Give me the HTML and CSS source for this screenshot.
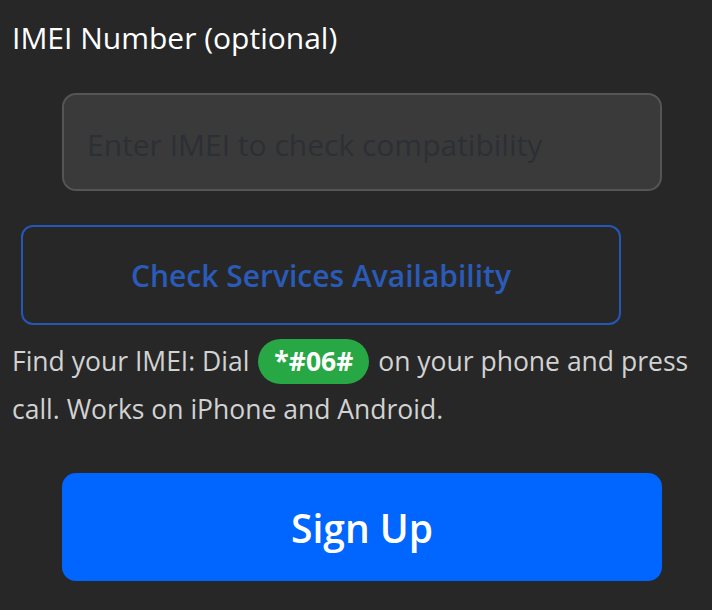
FILE: index.html
```html
<!DOCTYPE html>
<html lang="en">
<head>
<meta charset="utf-8">
<title>IMEI</title>
<link rel="stylesheet" href="styles.css">
</head>
<body>
<div class="form">
  <label class="field-label" for="imei">IMEI Number (optional)</label>
  <input class="imei-input" id="imei" type="text" placeholder="Enter IMEI to check compatibility">
  <button class="check-btn" type="button">Check Services Availability</button>
  <p class="help">Find your IMEI: Dial <span class="code">*#06#</span> on your phone and press call. Works on iPhone and Android.</p>
  <button class="signup-btn" type="button">Sign Up</button>
</div>
</body>
</html>
```
FILE: styles.css
```css
html, body {
  margin: 0;
  background: #272727;
}
.form {
  display: flex;
  flex-direction: column;
  align-items: flex-start;
  padding: 14px 12px 0 12px;
  font-family: "Open Sans", "Noto Sans", sans-serif;
}
.field-label {
  color: #ffffff;
  font-size: 30px;
  line-height: 48px;
}
.imei-input {
  box-sizing: border-box;
  margin: 31px 0 0 50px;
  width: 600px;
  height: 98px;
  padding: 4px 23px 0 23px;
  background: #3a3a3a;
  border: 2px solid #555555;
  border-radius: 14px;
  font-family: inherit;
  font-size: 30px;
  color: #eeeeee;
  outline: none;
}
.imei-input::placeholder {
  color: #2c3035;
}
.check-btn {
  box-sizing: border-box;
  margin: 34px 0 0 9px;
  width: 600px;
  height: 100px;
  background: transparent;
  border: 2px solid #2457b8;
  border-radius: 12px;
  color: #2a5bb8;
  font-family: inherit;
  font-size: 30px;
  font-weight: 600;
}
.help {
  margin: 12px 0 0 0;
  color: #d2d2d2;
  font-size: 26.5px;
  line-height: 48px;
}
.code {
  display: inline-block;
  margin: 0 2px;
  background: #28a745;
  color: #ffffff;
  font-weight: 700;
  border-radius: 23px;
  padding: 0 16px;
  line-height: 45px;
}
.signup-btn {
  box-sizing: border-box;
  margin: 40px 0 0 50px;
  width: 600px;
  height: 108px;
  background: #0066ff;
  border: none;
  border-radius: 14px;
  color: #ffffff;
  font-family: inherit;
  font-size: 39px;
  font-weight: 600;
}
```
